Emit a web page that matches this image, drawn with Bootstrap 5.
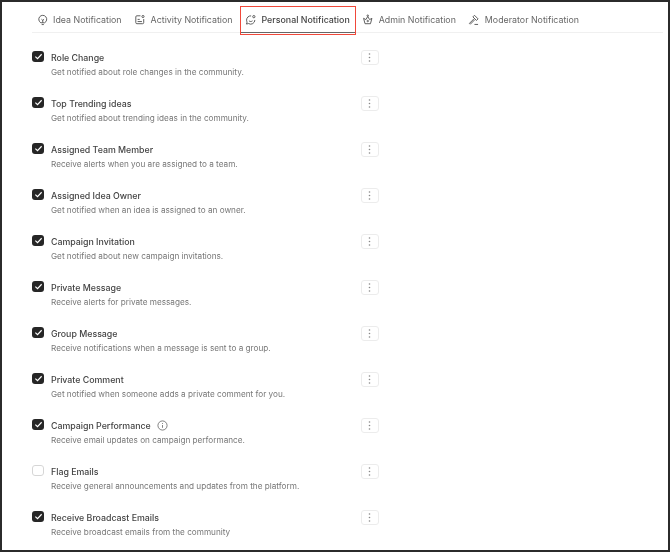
<!DOCTYPE html>
<html lang="en">
<head>
<meta charset="utf-8">
<title>Notifications</title>
<link href="https://cdn.jsdelivr.net/npm/bootstrap@5.3.0/dist/css/bootstrap.min.css" rel="stylesheet">
<style>
html,body{height:100%;background:#fff;}
body{font-family:"Inter","Liberation Sans",sans-serif;overflow:hidden;}
.frame{width:670px;height:552px;border:solid #2b2b2b;border-width:2px 2.500px 2.500px 2px;padding:0 5px 0 30px;filter:blur(.35px);}
.tabbar{height:31px;padding-top:4px;border-bottom:1px solid #f0f0f0;}
.tabitem{display:flex;align-items:center;gap:5px;height:27px;padding:1.500px 6px 0;font-size:8.85px;color:#666;white-space:nowrap;position:relative;margin-right:1px;border-bottom:1.500px solid transparent;}
.tabitem:first-child{padding-left:5px;}
.tabitem svg{width:11.500px;height:11.500px;flex:none;margin-left:-.5px;}
.tabon{color:#444;font-weight:500;border-bottom-color:#666;padding-right:6.500px;margin-right:.4px;}
.tabon::after{content:"";position:absolute;inset:0 0 -2.500px 0;border:1.500px solid #f0483a;}
.optlist{padding-top:17px;}
.optrow{height:46px;display:flex;align-items:flex-start;width:346.500px;}
.tick{width:12px;height:11.500px;border-radius:3px;background:#262626;flex:none;margin-right:7px;margin-top:.5px;display:flex;align-items:center;justify-content:center;}
.tick svg{width:9px;height:9px;}
.tickoff{background:#fff;border:1px solid #d6d6d6;}
.opttext{flex:1;min-width:0;padding-top:.5px;}
.optname{font-size:8.8px;font-weight:500;color:#444;line-height:13px;display:flex;align-items:center;gap:6px;}
.optdesc{font-size:8.2px;color:#777;line-height:13px;margin-top:2px;}
.kebab{width:17.500px;height:14.500px;border:1px solid #ececec;border-radius:3px;background:#fff;display:flex;align-items:center;justify-content:center;flex:none;padding:0;}
.kebab svg{width:3px;height:9px;}
.infoic{width:11px;height:11px;}
</style>
</head>
<body>
<div class="frame">
  <div class="tabbar d-flex">
    <div class="tabitem"><svg viewBox="0 0 16 16" fill="none" stroke="#555" stroke-width="1.300"><path d="M5.400 12.200A5.500 5.500 0 1 1 10.600 12.200z"/><path d="M8 12V8.500M6.200 7.300 8 8.800l1.800-1.500M6.500 14.700h3"/></svg>Idea Notification</div>
    <div class="tabitem"><svg viewBox="0 0 16 16" fill="none" stroke="#555" stroke-width="1.300"><path d="M9 2.500H4A1.500 1.500 0 0 0 2.500 4v8A1.500 1.500 0 0 0 4 13.500h8a1.500 1.500 0 0 0 1.500-1.500V7"/><circle cx="12.500" cy="3.500" r="1.500"/><path d="M5 7.500h3M5 10.500h6"/></svg>Activity Notification</div>
    <div class="tabitem tabon"><svg viewBox="0 0 16 16" fill="none" stroke="#555" stroke-width="1.300"><path d="M8.500 2.600A5.800 5.800 0 0 0 2.200 8.500c0 1 .3 2 .7 2.800L2 14l2.900-.7a5.800 5.800 0 0 0 8.800-5"/><circle cx="12.300" cy="3.700" r="1.600"/><path d="M5.500 9.500c1.500 1.300 3.500 1.300 5 0"/></svg>Personal Notification</div>
    <div class="tabitem"><svg viewBox="0 0 16 16" fill="none" stroke="#555" stroke-width="1.300"><path d="M4.200 13.500h7.600l2-7.500-3.200 1.800L8 3.500 5.400 7.800 2.200 6z"/><circle cx="8" cy="2.300" r="1"/><circle cx="8" cy="9.800" r="1"/></svg>Admin Notification</div>
    <div class="tabitem"><svg viewBox="0 0 16 16" fill="none" stroke="#555" stroke-width="1.300"><path d="M9 1.800l5 5-2.200 2.200-5-5zM8.300 6.700 2 13l1.200 1.200 6.300-6.300M9 14.500h5"/></svg>Moderator Notification</div>
  </div>
  <div class="optlist">
    <div class="optrow"><span class="tick"><svg viewBox="0 0 10 10" fill="none" stroke="#fff" stroke-width="1.300"><path d="M1.500 5.200l2.400 2.300 4.600-5"/></svg></span><div class="opttext"><div class="optname">Role Change</div><div class="optdesc">Get notified about role changes in the community.</div></div><button class="kebab" type="button" aria-label="More"><svg viewBox="0 0 3 9" fill="#888"><circle cx="1.500" cy="1" r=".8"/><circle cx="1.500" cy="4.500" r=".8"/><circle cx="1.500" cy="8" r=".8"/></svg></button></div>
    <div class="optrow"><span class="tick"><svg viewBox="0 0 10 10" fill="none" stroke="#fff" stroke-width="1.300"><path d="M1.500 5.200l2.400 2.300 4.600-5"/></svg></span><div class="opttext"><div class="optname">Top Trending ideas</div><div class="optdesc">Get notified about trending ideas in the community.</div></div><button class="kebab" type="button" aria-label="More"><svg viewBox="0 0 3 9" fill="#888"><circle cx="1.500" cy="1" r=".8"/><circle cx="1.500" cy="4.500" r=".8"/><circle cx="1.500" cy="8" r=".8"/></svg></button></div>
    <div class="optrow"><span class="tick"><svg viewBox="0 0 10 10" fill="none" stroke="#fff" stroke-width="1.300"><path d="M1.500 5.200l2.400 2.300 4.600-5"/></svg></span><div class="opttext"><div class="optname">Assigned Team Member</div><div class="optdesc">Receive alerts when you are assigned to a team.</div></div><button class="kebab" type="button" aria-label="More"><svg viewBox="0 0 3 9" fill="#888"><circle cx="1.500" cy="1" r=".8"/><circle cx="1.500" cy="4.500" r=".8"/><circle cx="1.500" cy="8" r=".8"/></svg></button></div>
    <div class="optrow"><span class="tick"><svg viewBox="0 0 10 10" fill="none" stroke="#fff" stroke-width="1.300"><path d="M1.500 5.200l2.400 2.300 4.600-5"/></svg></span><div class="opttext"><div class="optname">Assigned Idea Owner</div><div class="optdesc">Get notified when an idea is assigned to an owner.</div></div><button class="kebab" type="button" aria-label="More"><svg viewBox="0 0 3 9" fill="#888"><circle cx="1.500" cy="1" r=".8"/><circle cx="1.500" cy="4.500" r=".8"/><circle cx="1.500" cy="8" r=".8"/></svg></button></div>
    <div class="optrow"><span class="tick"><svg viewBox="0 0 10 10" fill="none" stroke="#fff" stroke-width="1.300"><path d="M1.500 5.200l2.400 2.300 4.600-5"/></svg></span><div class="opttext"><div class="optname">Campaign Invitation</div><div class="optdesc">Get notified about new campaign invitations.</div></div><button class="kebab" type="button" aria-label="More"><svg viewBox="0 0 3 9" fill="#888"><circle cx="1.500" cy="1" r=".8"/><circle cx="1.500" cy="4.500" r=".8"/><circle cx="1.500" cy="8" r=".8"/></svg></button></div>
    <div class="optrow"><span class="tick"><svg viewBox="0 0 10 10" fill="none" stroke="#fff" stroke-width="1.300"><path d="M1.500 5.200l2.400 2.300 4.600-5"/></svg></span><div class="opttext"><div class="optname">Private Message</div><div class="optdesc">Receive alerts for private messages.</div></div><button class="kebab" type="button" aria-label="More"><svg viewBox="0 0 3 9" fill="#888"><circle cx="1.500" cy="1" r=".8"/><circle cx="1.500" cy="4.500" r=".8"/><circle cx="1.500" cy="8" r=".8"/></svg></button></div>
    <div class="optrow"><span class="tick"><svg viewBox="0 0 10 10" fill="none" stroke="#fff" stroke-width="1.300"><path d="M1.500 5.200l2.400 2.300 4.600-5"/></svg></span><div class="opttext"><div class="optname">Group Message</div><div class="optdesc">Receive notifications when a message is sent to a group.</div></div><button class="kebab" type="button" aria-label="More"><svg viewBox="0 0 3 9" fill="#888"><circle cx="1.500" cy="1" r=".8"/><circle cx="1.500" cy="4.500" r=".8"/><circle cx="1.500" cy="8" r=".8"/></svg></button></div>
    <div class="optrow"><span class="tick"><svg viewBox="0 0 10 10" fill="none" stroke="#fff" stroke-width="1.300"><path d="M1.500 5.200l2.400 2.300 4.600-5"/></svg></span><div class="opttext"><div class="optname">Private Comment</div><div class="optdesc">Get notified when someone adds a private comment for you.</div></div><button class="kebab" type="button" aria-label="More"><svg viewBox="0 0 3 9" fill="#888"><circle cx="1.500" cy="1" r=".8"/><circle cx="1.500" cy="4.500" r=".8"/><circle cx="1.500" cy="8" r=".8"/></svg></button></div>
    <div class="optrow"><span class="tick"><svg viewBox="0 0 10 10" fill="none" stroke="#fff" stroke-width="1.300"><path d="M1.500 5.200l2.400 2.300 4.600-5"/></svg></span><div class="opttext"><div class="optname">Campaign Performance <svg class="infoic" viewBox="0 0 12 12" fill="none" stroke="#555" stroke-width=".8"><circle cx="6" cy="6" r="5"/><path d="M6 5.500v3M6 3.300v1"/></svg></div><div class="optdesc">Receive email updates on campaign performance.</div></div><button class="kebab" type="button" aria-label="More"><svg viewBox="0 0 3 9" fill="#888"><circle cx="1.500" cy="1" r=".8"/><circle cx="1.500" cy="4.500" r=".8"/><circle cx="1.500" cy="8" r=".8"/></svg></button></div>
    <div class="optrow"><span class="tick tickoff"></span><div class="opttext"><div class="optname">Flag Emails</div><div class="optdesc">Receive general announcements and updates from the platform.</div></div><button class="kebab" type="button" aria-label="More"><svg viewBox="0 0 3 9" fill="#888"><circle cx="1.500" cy="1" r=".8"/><circle cx="1.500" cy="4.500" r=".8"/><circle cx="1.500" cy="8" r=".8"/></svg></button></div>
    <div class="optrow"><span class="tick"><svg viewBox="0 0 10 10" fill="none" stroke="#fff" stroke-width="1.300"><path d="M1.500 5.200l2.400 2.300 4.600-5"/></svg></span><div class="opttext"><div class="optname">Receive Broadcast Emails</div><div class="optdesc">Receive broadcast emails from the community</div></div><button class="kebab" type="button" aria-label="More"><svg viewBox="0 0 3 9" fill="#888"><circle cx="1.500" cy="1" r=".8"/><circle cx="1.500" cy="4.500" r=".8"/><circle cx="1.500" cy="8" r=".8"/></svg></button></div>
  </div>
</div>
<script src="https://cdn.jsdelivr.net/npm/bootstrap@5.3.0/dist/js/bootstrap.bundle.min.js"></script>
</body>
</html>
